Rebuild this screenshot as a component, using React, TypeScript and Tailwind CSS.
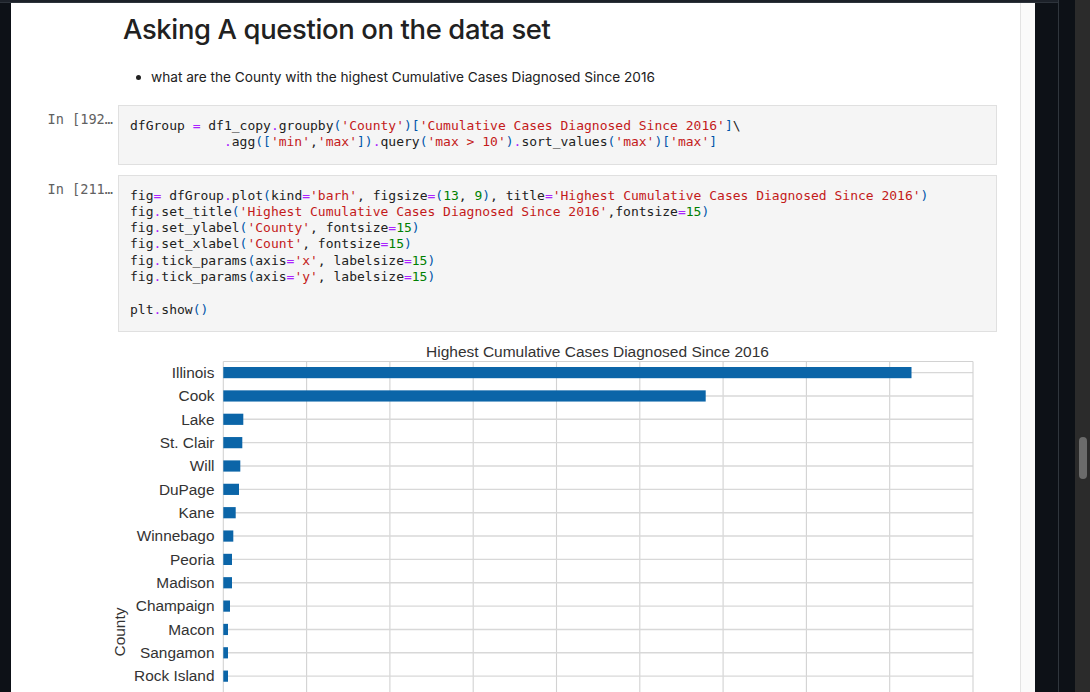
import React from 'react';

type Tok = { t: string; c: string };

const COLORS: Record<string, string> = {
  str: 'text-[#c41a1a]',
  num: 'text-[#008000]',
  op: 'text-[#aa22ff]',
  br: 'text-[#0055aa]',
  txt: 'text-[#212121]',
};

// very small python-ish tokenizer, just enough for the cells below
function tokenize(line: string): Tok[] {
  const out: Tok[] = [];
  const re = /('[^']*')|(\b\d+\b)|([=.>])|([()[\]])|([^'=.>()[\]\d]+|\d)/g;
  let m: RegExpExecArray | null;
  while ((m = re.exec(line))) {
    if (m[1]) out.push({ t: m[1], c: 'str' });
    else if (m[2]) out.push({ t: m[2], c: 'num' });
    else if (m[3]) out.push({ t: m[3], c: 'op' });
    else if (m[4]) out.push({ t: m[4], c: 'br' });
    else out.push({ t: m[0], c: 'txt' });
  }
  return out;
}

const cell1 = [
  "dfGroup = df1_copy.groupby('County')['Cumulative Cases Diagnosed Since 2016']\\",
  "            .agg(['min','max']).query('max > 10').sort_values('max')['max']",
];

const cell2 = [
  "fig= dfGroup.plot(kind='barh', figsize=(13, 9), title='Highest Cumulative Cases Diagnosed Since 2016')",
  "fig.set_title('Highest Cumulative Cases Diagnosed Since 2016',fontsize=15)",
  "fig.set_ylabel('County', fontsize=15)",
  "fig.set_xlabel('Count', fontsize=15)",
  "fig.tick_params(axis='x', labelsize=15)",
  "fig.tick_params(axis='y', labelsize=15)",
  '',
  'plt.show()',
];

function CodeCell({ prompt, lines }: { prompt: string; lines: string[] }) {
  return (
    <div className="flex">
      <div className="w-[107px] shrink-0 pt-[6px] pr-[5px] text-right font-['DejaVu_Sans_Mono',monospace] text-[13.6px] leading-[16px] text-[#616161]">
        {prompt}
      </div>
      <div className="w-[879px] shrink-0 border border-[#e0e0e0] bg-[#f5f5f5] pl-[11px] pt-[12px] pb-[13px] font-['DejaVu_Sans_Mono',monospace] text-[13px] leading-[16.3px] whitespace-pre">
        {lines.map((l, i) => (
          <div key={i} className="h-[16.3px]">
            {tokenize(l).map((tk, j) => (
              <span key={j} className={COLORS[tk.c]}>
                {tk.t}
              </span>
            ))}
          </div>
        ))}
      </div>
    </div>
  );
}

const counties = [
  ['Illinois', 911.5],
  ['Cook', 705.7],
  ['Lake', 243.3],
  ['St. Clair', 242.3],
  ['Will', 240.3],
  ['DuPage', 239],
  ['Kane', 235.7],
  ['Winnebago', 233.3],
  ['Peoria', 232],
  ['Madison', 232],
  ['Champaign', 230],
  ['Macon', 228],
  ['Sangamon', 228],
  ['Rock Island', 228],
] as const;

const chartFont = "'Liberation Sans', Arial, sans-serif";

function Chart() {
  const left = 223.3;
  const right = 973;
  const top = 361.5;
  const step = 23.35;
  const first = 372.6;
  const bottom = 700;
  return (
    <svg width={920} height={360} viewBox="100 332 920 360" className="block">
      <text x={597.5} y={356.5} textAnchor="middle" fontSize={15.5} fill="#333" fontFamily={chartFont}>
        Highest Cumulative Cases Diagnosed Since 2016
      </text>
      {/* grid */}
      {[1, 2, 3, 4, 5, 6, 7, 8].map((k) => {
        const x = left + ((right - left) / 9) * k;
        return <line key={k} x1={x} x2={x} y1={top} y2={bottom} stroke="#d2d2d2" strokeWidth={1.1} />;
      })}
      {counties.map((_, i) => {
        const y = first + step * i;
        return <line key={i} x1={left} x2={right} y1={y} y2={y} stroke="#d8d8d8" strokeWidth={1.4} />;
      })}
      {/* spines */}
      <line x1={left} x2={right} y1={top} y2={top} stroke="#d2d2d2" strokeWidth={1.1} />
      <line x1={left} x2={left} y1={top} y2={bottom} stroke="#d2d2d2" strokeWidth={1.1} />
      <line x1={right} x2={right} y1={top} y2={bottom} stroke="#d2d2d2" strokeWidth={1.1} />
      {/* bars */}
      {counties.map(([name, end], i) => {
        const y = first + step * i;
        return (
          <g key={name}>
            <rect x={left} y={y - 5.6} width={end - left} height={11.2} fill="#0b65a8" />
            <text x={214.5} y={y + 5.3} textAnchor="end" fontSize={15.4} fill="#333" fontFamily={chartFont}>
              {name}
            </text>
          </g>
        );
      })}
      <text
        x={124.5}
        y={632}
        textAnchor="middle"
        fontSize={15.4}
        fill="#333"
        fontFamily={chartFont}
        transform="rotate(-90 124.5 632)"
      >
        County
      </text>
    </svg>
  );
}

export default function App() {
  return (
    <div className="flex h-[692px] w-[1090px] overflow-hidden bg-[#0d1117] font-['Inter','Noto_Sans',sans-serif]">
      <div className="flex w-[1058px] shrink-0 flex-col">
        <div className="h-[3px] shrink-0 border-b border-[#2d333b] bg-[#1c2129]" />
        <div className="flex flex-1 overflow-hidden">
          <div className="w-[11px] shrink-0 bg-[#0d1117]" />
          {/* notebook */}
          <div className="w-[1009px] shrink-0 bg-white">
            <div className="ml-[112px] pt-[8px]">
              <h1 className="text-[27.4px] font-medium leading-[36px] tracking-[-0.35px] text-[#212121]">
                Asking A question on the data set
              </h1>
              <div className="mt-[20px] flex items-center text-[13.65px] leading-[20px] text-[#212121]">
                <span className="ml-[13px] mr-[10px] h-[5px] w-[5px] rounded-full bg-[#212121]" />
                <span>what are the County with the highest Cumulative Cases Diagnosed Since 2016</span>
              </div>
            </div>
            <div className="mt-[18px]">
              <CodeCell prompt="In [192…" lines={cell1} />
            </div>
            <div className="mt-[10px]">
              <CodeCell prompt="In [211…" lines={cell2} />
            </div>
            <div className="ml-[89px]">
              <Chart />
            </div>
          </div>
          <div className="w-[15px] shrink-0 border-l border-[#e3e3e3] bg-[#fafafa]" />
          <div className="flex-1 bg-[#0d1117]" />
        </div>
      </div>
      <div className="w-[17px] shrink-0 border-l border-[#30363d] bg-[#0d1117]" />
      <div className="relative w-[15px] shrink-0 bg-[#2b2b2b]">
        <div className="absolute left-[4px] top-[437px] h-[42px] w-[8px] rounded-full bg-[#6b6b6b]" />
      </div>
    </div>
  );
}
